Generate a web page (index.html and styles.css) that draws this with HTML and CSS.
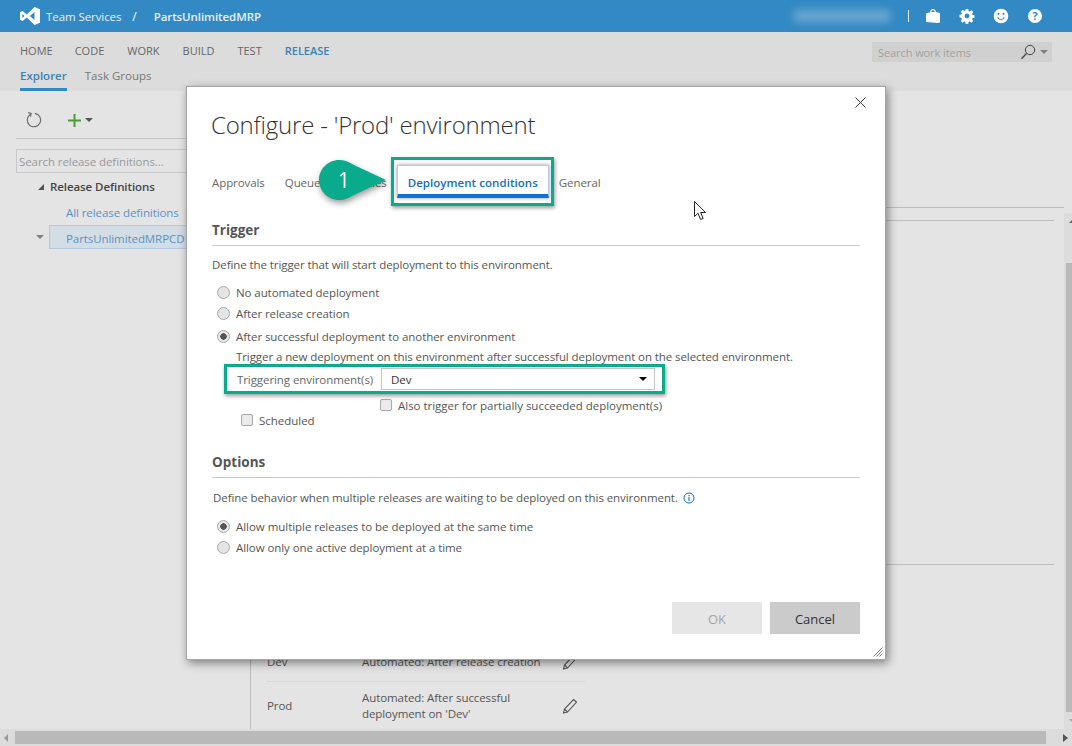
FILE: index.html
```html
<!DOCTYPE html>
<html lang="en">
<head>
  <meta charset="UTF-8">
  <meta name="viewport" content="width=device-width, initial-scale=1.0">
  <title>Configure - 'Prod' environment</title>
  <link rel="stylesheet" href="styles.css">
</head>
<body>
  <header class="topbar">
    <svg class="vs-logo" width="20" height="18" viewBox="0 0 20 18"><path fill="#fff" d="M14.5 0 20 2.3v13.4L14.5 18 6.8 10.6 2.6 14 0 12.7V5.3L2.6 4l4.2 3.4zM14.5 5 9.9 9l4.6 4zM2.5 6.9v4.2L4.6 9z"/></svg>
    <span class="brand">Team Services</span>
    <span class="slash">/</span>
    <span class="project">PartsUnlimitedMRP</span>
    <span class="spacer"></span>
    <span class="blurred-name"></span>
    <span class="divider"></span>
    <svg class="top-icon" width="16" height="16" viewBox="0 0 16 16"><path fill="#fff" d="M1 5.500 5 4.300C5.300 2.400 6.400 1 8 1s2.700 1.300 3 3l4 1v9.500L13 15 1 14zM6.200 4h3.600C9.500 2.900 8.900 2.200 8 2.200S6.500 2.900 6.200 4z"/></svg>
    <svg class="top-icon" width="16" height="16" viewBox="0 0 16 16"><path fill="#fff" fill-rule="evenodd" d="M6.700 1h2.600l.3 1.900 1.200.5 1.600-1.100 1.800 1.800-1.100 1.600.5 1.200 1.900.3v2.600l-1.900.3-.5 1.200 1.100 1.600-1.800 1.800-1.600-1.100-1.200.5-.3 1.900H6.700l-.3-1.900-1.200-.5-1.600 1.100-1.800-1.800 1.100-1.600-.5-1.200L.5 9.300V6.700l1.900-.3.500-1.200-1.100-1.600 1.800-1.800 1.600 1.100 1.200-.5zM8 5.600a2.400 2.400 0 1 0 0 4.800 2.400 2.400 0 0 0 0-4.800z"/></svg>
    <svg class="top-icon" width="16" height="16" viewBox="0 0 16 16"><path fill="#fff" fill-rule="evenodd" d="M8 .7a7.300 7.300 0 1 1 0 14.600A7.300 7.300 0 0 1 8 .700zM5.500 4.800a1 1 0 1 0 0 2.100 1 1 0 0 0 0-2.100zm5 0a1 1 0 1 0 0 2.100 1 1 0 0 0 0-2.100zM4.300 9.300c.6 1.800 2 2.800 3.700 2.800s3.100-1 3.700-2.800l-.9-.3c-.5 1.300-1.500 2.100-2.800 2.100S5.700 10.300 5.200 9z"/></svg>
    <span class="help-icon">?</span>
  </header>

  <nav class="hubs">
    <div class="hub-row">
      <span class="hub">HOME</span>
      <span class="hub">CODE</span>
      <span class="hub">WORK</span>
      <span class="hub">BUILD</span>
      <span class="hub">TEST</span>
      <span class="hub hub-active">RELEASE</span>
      <span class="spacer"></span>
      <div class="work-search">
        <span class="work-search-text">Search work items</span>
        <svg width="16" height="16" viewBox="0 0 16 16"><circle cx="10" cy="6" r="4.700" fill="none" stroke="#444" stroke-width="1"/><path d="M6.500 9.500 1.500 14.700" stroke="#444" stroke-width="1.300"/></svg>
        <span class="caret caret-grey caret-search"></span>
      </div>
    </div>
    <div class="sub-row">
      <span class="sub sub-active">Explorer</span>
      <span class="sub">Task Groups</span>
    </div>
  </nav>

  <main class="workspace">
    <aside class="sidebar">
      <div class="side-tools">
        <svg width="18" height="18" viewBox="0 0 18 18"><path d="M5.500 3.300A6.700 6.700 0 1 0 9.800 2.400" fill="none" stroke="#666" stroke-width="1.100"/><path d="M3.200 1.600 6.200 2.500 5.500 5.600" fill="none" stroke="#666" stroke-width="1.100"/></svg>
        <svg class="green-plus" width="13" height="13" viewBox="0 0 13 13"><path d="M6.500 0v13M0 6.500h13" stroke="#4f9a3e" stroke-width="2"/></svg>
        <span class="caret caret-dark"></span>
      </div>
      <div class="side-search">Search release definitions...</div>
      <div class="tree-head"><span class="tree-arrow"></span>Release Definitions</div>
      <div class="tree-link">All release definitions</div>
      <div class="tree-row">
        <span class="caret caret-grey"></span>
        <span class="tree-selected">PartsUnlimitedMRPCD</span>
      </div>
    </aside>

    <section class="content">
      <div class="content-rule"></div>
      <div class="content-rule-short"></div>
      <div class="content-rule-short content-rule-low"></div>
      <div class="env-rows">
        <div class="env-row env-row-first">
          <span class="env-name">Dev</span>
          <span class="env-trigger">Automated: After release creation</span>
          <svg class="pencil" width="16" height="16" viewBox="0 0 16 16"><path d="M11.500 1.500 14.500 4 5.500 14 1.500 15 2.500 11zM2.500 11 5.500 14" fill="none" stroke="#555" stroke-width="1.100"/></svg>
        </div>
        <div class="env-row">
          <span class="env-name">Prod</span>
          <span class="env-trigger">Automated: After successful<br>deployment on 'Dev'</span>
          <svg class="pencil" width="16" height="16" viewBox="0 0 16 16"><path d="M11.500 1.500 14.500 4 5.500 14 1.500 15 2.500 11zM2.500 11 5.500 14" fill="none" stroke="#555" stroke-width="1.100"/></svg>
        </div>
      </div>
    </section>
    <div class="vscroll"><span class="vscroll-up"></span><span class="vscroll-thumb"></span><span class="vscroll-down"></span></div>
  </main>

  <div class="hscroll">
    <span class="hscroll-left"></span>
    <span class="hscroll-thumb"></span>
    <span class="hscroll-right"></span>
  </div>

  <div class="dialog">
    <svg class="dialog-close" width="11" height="11" viewBox="0 0 11 11"><path d="M.5.500l10 10M10.500.500l-10 10" stroke="#333" stroke-width="1"/></svg>
    <h1 class="dialog-title">Configure - 'Prod' environment</h1>

    <div class="tabs">
      <span class="tab">Approvals</span>
      <span class="tab tab-queue">Queueing policies</span>
      <span class="tab tab-active">Deployment conditions</span>
      <span class="tab">General</span>
    </div>

    <h2 class="section-title">Trigger</h2>
    <p class="help-line">Define the trigger that will start deployment to this environment.</p>

    <div class="option option-first"><span class="radio"></span>No automated deployment</div>
    <div class="option"><span class="radio"></span>After release creation</div>
    <div class="option option-third"><span class="radio radio-on"></span>After successful deployment to another environment</div>
    <div class="option-note">Trigger a new deployment on this environment after successful deployment on the selected environment.</div>

    <div class="env-picker">
      <span class="env-label">Triggering environment(s)</span>
      <div class="env-select"><span>Dev</span><span class="caret caret-black"></span></div>
    </div>
    <div class="check check-partial"><span class="box"></span>Also trigger for partially succeeded deployment(s)</div>
    <div class="check check-scheduled"><span class="box"></span>Scheduled</div>

    <h2 class="section-title section-options">Options</h2>
    <p class="help-line help-options">Define behavior when multiple releases are waiting to be deployed on this environment.
      <svg class="info" width="12" height="12" viewBox="0 0 12 12"><circle cx="6" cy="6" r="5" fill="none" stroke="#106ebe" stroke-width="1"/><path d="M6 5v4M6 3v1.200" stroke="#106ebe" stroke-width="1.100"/></svg>
    </p>
    <div class="option option-first-b"><span class="radio radio-on"></span>Allow multiple releases to be deployed at the same time</div>
    <div class="option"><span class="radio"></span>Allow only one active deployment at a time</div>

    <div class="dialog-buttons">
      <span class="btn btn-off">OK</span>
      <span class="btn">Cancel</span>
    </div>
    <svg class="grip" width="10" height="10" viewBox="0 0 10 10"><path d="M9.500.500l-9 9M9.500 3.500l-6 6M9.500 6.500l-3 3" stroke="#777" stroke-width="1"/></svg>

    <!-- annotations drawn on top of the screenshot -->
    <div class="mark mark-tab"></div>
    <div class="mark mark-env"></div>
    <div class="callout">
      <svg width="72" height="44" viewBox="0 0 72 44"><path fill="#0aab8c" d="M21 1C27 1 31 3 37 6.500L68 21 37 35.500C31 39 27 41 21 41 10 41 1 32 1 21S10 1 21 1z"/></svg>
      <span class="callout-num">1</span>
    </div>
    <svg class="cursor" width="14" height="20" viewBox="0 0 14 20"><path d="M.5.500v15l3.500-3.300 2.600 6.300 2.600-1-2.600-6h5z" fill="#fff" stroke="#222" stroke-width="1"/></svg>
  </div>
</body>
</html>
```

FILE: styles.css
```css
* {
  box-sizing: border-box;
}
html, body {
  margin: 0;
  height: 746px;
  overflow: hidden;
}
body {
  position: relative;
  display: flex;
  flex-direction: column;
  font-family: "Open Sans", "Liberation Sans", sans-serif;
  font-size: 11.5px;
  letter-spacing: -0.08px;
  color: #444;
  background: #e4e4e4;
}
.spacer {
  flex: 1;
}

/* top bar */
.topbar {
  height: 32px;
  display: flex;
  align-items: center;
  background: #3289c3;
  color: #fff;
  padding: 0 30px 0 20px;
  flex: none;
}
.brand {
  margin-left: 6px;
  color: #e6f1f8;
}
.slash {
  margin-left: 11px;
  font-size: 12px;
}
.project {
  margin-left: 17px;
  font-weight: 600;
  color: #e6f1f8;
}
.blurred-name {
  width: 96px;
  height: 12px;
  margin-right: 18px;
  background: #6ba8d3;
  filter: blur(4px);
}
.divider {
  width: 1px;
  height: 12px;
  background: #dcebf5;
  margin-right: 16px;
}
.top-icon {
  margin-right: 18px;
}
.help-icon {
  width: 14px;
  height: 14px;
  border-radius: 50%;
  background: #fff;
  color: #3289c3;
  font-size: 11px;
  font-weight: 700;
  line-height: 14px;
  text-align: center;
  margin-left: 1px;
}

/* hubs */
.hubs {
  height: 59px;
  flex: none;
  background: #dcdcdc;
  padding: 0 20px;
}
.hub-row {
  height: 37px;
  display: flex;
  align-items: center;
}
.hub {
  font-size: 11px;
  letter-spacing: 0;
  color: #666;
  margin-right: 23px;
}
.hub:first-child {
  margin-right: 22px;
}
.hub-active {
  color: #3a83b8;
  font-weight: 600;
}
.work-search {
  width: 180px;
  height: 20px;
  background: #d0d0d0;
  display: flex;
  align-items: center;
  padding: 0 4px 0 6px;
  margin-top: 3px;
}
.work-search-text {
  flex: 1;
  color: #a2a2a2;
  font-size: 11px;
}
.caret-search {
  margin-left: 4px;
}
.sub-row {
  display: flex;
  height: 22px;
}
.sub {
  color: #777;
  margin-right: 18px;
  height: 22px;
  line-height: 14px;
  letter-spacing: 0;
}
.sub-active {
  color: #3a83b8;
  font-weight: 600;
  border-bottom: 3px solid #3289c3;
}

/* carets */
.caret {
  display: inline-block;
  width: 0;
  height: 0;
  border-left: 4px solid transparent;
  border-right: 4px solid transparent;
  border-top: 4px solid #777;
}
.caret-grey {
  border-top-color: #808080;
}
.caret-dark {
  border-top-color: #555;
}
.caret-black {
  border-top-color: #000;
}

/* page behind the dialog */
.workspace {
  flex: 1;
  display: flex;
  min-height: 0;
}
.sidebar {
  width: 251px;
  flex: none;
  border-right: 1px solid #bbb;
  padding-left: 16px;
}
.side-tools {
  height: 48px;
  border-bottom: 1px solid #c4c4c4;
  display: flex;
  align-items: center;
  padding: 11px 0 0 9px;
}
.green-plus {
  margin-left: 25px;
  margin-right: 4px;
}
.side-search {
  margin-top: 10px;
  height: 24px;
  width: 200px;
  border: 1px solid #c8c8c8;
  padding-left: 2px;
  line-height: 24px;
  color: #9a9a9a;
}
.tree-head {
  margin: 5px 0 0 22px;
  font-weight: 600;
  color: #444;
  height: 18px;
  line-height: 18px;
  display: flex;
  align-items: center;
}
.tree-arrow {
  width: 0;
  height: 0;
  margin-right: 6px;
  border-bottom: 6px solid #555;
  border-left: 6px solid transparent;
}
.tree-link {
  margin: 8px 0 0 50px;
  color: #5b93c4;
  height: 18px;
  line-height: 18px;
}
.tree-row {
  display: flex;
  align-items: center;
  margin: 3px 0 0 20px;
}
.tree-selected {
  margin-left: 5px;
  width: 200px;
  height: 24px;
  line-height: 25px;
  padding-left: 16px;
  color: #5b93c4;
  background: #d3dde6;
  border: 1px solid #b3cbe0;
}
.content {
  flex: 1;
  padding-top: 116px;
  display: flex;
  flex-direction: column;
}
.content-rule {
  border-top: 1px solid #bdbdbd;
}
.content-rule-short {
  margin: 12px 10px 0 0;
  border-top: 1px solid #bdbdbd;
}
.content-rule-low {
  margin-top: 343px;
}
.env-rows {
  margin: auto 0 0 16px;
  width: 318px;
}
.env-row {
  display: flex;
  align-items: center;
  color: #555;
  height: 48px;
  border-top: 1px solid #d8d8d8;
}
.env-row-first {
  height: 40px;
}
.env-name {
  width: 95px;
}
.env-trigger {
  width: 200px;
  line-height: 16px;
}
.vscroll {
  width: 8px;
  flex: none;
  margin-top: 122px;
  background: #dcdcdc;
  display: flex;
  flex-direction: column;
}
.vscroll-up {
  height: 50px;
  flex: none;
}
.vscroll-up::before {
  content: "";
  display: block;
  width: 0;
  margin: 7px 0 0 5px;
  border-left: 3px solid transparent;
  border-bottom: 3px solid #666;
}
.vscroll-thumb {
  flex: 1;
  margin-left: 2px;
  background: #b9b9b9;
}
.vscroll-down {
  height: 17px;
  flex: none;
}
.vscroll-down::before {
  content: "";
  display: block;
  width: 0;
  margin: 7px 0 0 5px;
  border-left: 3px solid transparent;
  border-top: 3px solid #aaa;
}
.hscroll {
  height: 17px;
  flex: none;
  display: flex;
  align-items: center;
  background: #dcdcdc;
  padding: 0 4px;
}
.hscroll-left {
  border-right: 4px solid #999;
  border-top: 4px solid transparent;
  border-bottom: 4px solid transparent;
}
.hscroll-thumb {
  width: 1031px;
  height: 13px;
  margin-left: 7px;
  background: #b9b9b9;
}
.hscroll-right {
  margin-left: 17px;
  border-left: 5px solid #555;
  border-top: 4px solid transparent;
  border-bottom: 4px solid transparent;
}

/* dialog */
.dialog {
  position: absolute;
  left: 186px;
  top: 86px;
  width: 700px;
  height: 574px;
  background: #fff;
  border: 1px solid #a5a5a5;
  box-shadow: 2px 3px 9px rgba(0, 0, 0, .45);
  padding: 0 25px 0 25px;
  color: #555;
}
.dialog-close {
  position: absolute;
  right: 19px;
  top: 10px;
}
.dialog-title {
  margin: 22px 0 0 -1px;
  font-size: 24px;
  line-height: 32px;
  font-weight: 300;
  letter-spacing: -0.2px;
  color: #333;
}
.tabs {
  display: flex;
  margin-top: 24px;
  height: 33px;
}
.tab {
  color: #666;
  margin-right: 20px;
  line-height: 36px;
}
.tab-queue {
  width: 92px;
  white-space: nowrap;
  word-spacing: 8px;
}
.tab-active {
  width: 152px;
  height: 33px;
  line-height: 34px;
  margin-right: 10px;
  text-align: center;
  font-weight: 600;
  letter-spacing: 0.05px;
  color: #106ebe;
  border: 1px solid #b7c9f0;
  border-bottom: 4px solid #0f72d6;
  box-shadow: 0 0 4px rgba(0, 0, 0, .4);
}
.section-title {
  margin: 15px 0 0;
  height: 33px;
  padding-top: 4px;
  font-size: 13.500px;
  letter-spacing: 0;
  line-height: 26px;
  font-weight: 700;
  color: #555;
  border-bottom: 1px solid #c8c8c8;
}
.help-line {
  margin: 10px 0 0;
  line-height: 18px;
  color: #555;
}
.option {
  display: flex;
  align-items: center;
  height: 21px;
  padding-left: 5px;
}
.option-first {
  margin-top: 8px;
}
.option-third {
  margin-top: 2px;
}
.radio {
  width: 13px;
  height: 13px;
  margin-right: 6px;
  border-radius: 50%;
  border: 1px solid #a8a8a8;
  background: #e4e4e4;
  flex: none;
}
.radio-on {
  background: radial-gradient(circle, #555 0, #555 3px, #e8e8e8 3.500px);
}
.option-note {
  margin-top: 1px;
  padding-left: 24px;
  height: 18px;
  line-height: 18px;
}
.env-picker {
  display: flex;
  align-items: center;
  margin-top: 1px;
  padding-left: 25px;
  height: 24px;
}
.env-label {
  width: 144px;
  color: #666;
}
.env-select {
  width: 274px;
  height: 22px;
  padding: 0 7px 0 9px;
  display: flex;
  align-items: center;
  justify-content: space-between;
  border: 1px solid #c4c4c4;
  color: #333;
}
.check {
  display: flex;
  align-items: center;
  height: 18px;
  letter-spacing: -0.02px;
}
.box {
  width: 12px;
  height: 12px;
  margin-right: 6px;
  border: 1px solid #a8a8a8;
  border-radius: 2px;
  background: #eaeaea;
  flex: none;
}
.check-partial {
  margin: 5px 0 0 168px;
}
.check-scheduled {
  margin: -3px 0 0 29px;
}
.section-options {
  margin-top: 16px;
}
.help-options {
  margin-left: 1px;
  margin-top: 11px;
}
.info {
  margin-left: 2px;
  vertical-align: -2px;
}
.option-first-b {
  margin-top: 9px;
  letter-spacing: -0.04px;
}
.dialog-buttons {
  position: absolute;
  right: 25px;
  bottom: 25px;
  display: flex;
  gap: 8px;
}
.btn {
  width: 90px;
  height: 32px;
  background: #cbcbcb;
  color: #333;
  font-size: 13px;
  letter-spacing: 0;
  line-height: 34px;
  text-align: center;
}
.btn-off {
  background: #e6e6e6;
  color: #a5a5a5;
}
.grip {
  position: absolute;
  right: 2px;
  bottom: 2px;
}

/* annotations */
.mark {
  position: absolute;
  border: 3px solid #0aab8c;
  box-shadow: 1px 2px 4px rgba(0, 0, 0, .4);
}
.mark-tab {
  left: 204px;
  top: 70px;
  width: 163px;
  height: 49px;
}
.mark-env {
  left: 37px;
  top: 277px;
  width: 441px;
  height: 30px;
}
.callout {
  position: absolute;
  left: 131px;
  top: 72px;
  width: 72px;
  height: 44px;
  filter: drop-shadow(1px 3px 3px rgba(0, 0, 0, .4));
}
.callout-num {
  position: absolute;
  left: 20px;
  top: 7px;
  color: #fff;
  font-size: 21px;
  line-height: 28px;
}
.cursor {
  position: absolute;
  left: 507px;
  top: 114px;
}
```
